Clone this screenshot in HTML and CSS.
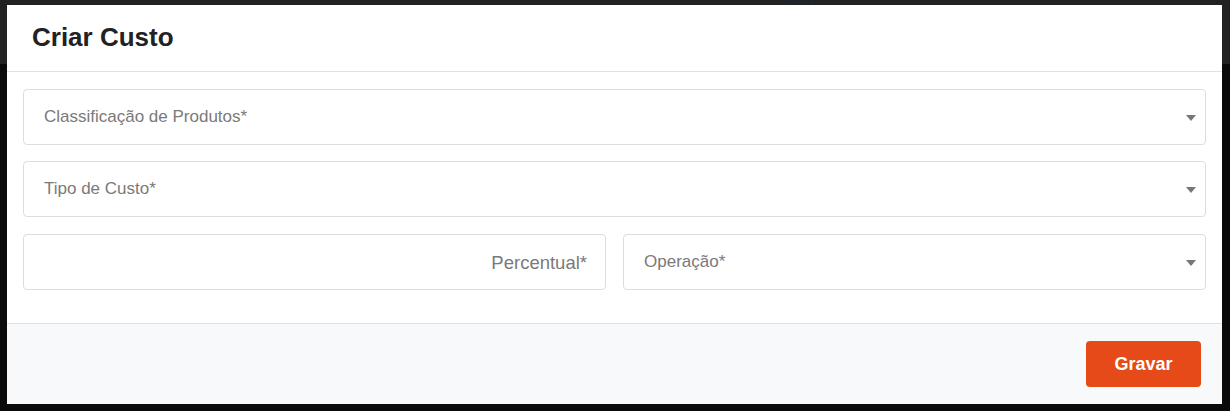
FILE: index.html
```html
<!DOCTYPE html>
<html lang="pt">
<head>
<meta charset="utf-8">
<title>Criar Custo</title>
<link rel="stylesheet" href="styles.css">
</head>
<body>
<div class="page">
  <div class="topbar"><span class="brand">ROI</span></div>
  <div class="rest"></div>
</div>
<div class="modal">
  <div class="modal-header">
    <h2 class="modal-title">Criar Custo</h2>
  </div>
  <div class="modal-body">
    <div class="field select">
      <span class="placeholder">Classificação de Produtos*</span>
      <span class="caret"></span>
    </div>
    <div class="field select">
      <span class="placeholder">Tipo de Custo*</span>
      <span class="caret"></span>
    </div>
    <div class="row">
      <div class="field input">
        <span class="placeholder big">Percentual*</span>
      </div>
      <div class="field select">
        <span class="placeholder">Operação*</span>
        <span class="caret"></span>
      </div>
    </div>
  </div>
  <div class="modal-footer">
    <button class="btn-primary" type="button">Gravar</button>
  </div>
</div>
</body>
</html>
```
FILE: styles.css
```css
html, body {
  margin: 0;
  padding: 0;
  height: 100%;
  font-family: "Liberation Sans", Arial, sans-serif;
}
.page {
  height: 411px;
  display: flex;
  flex-direction: column;
  overflow: hidden;
}
.topbar {
  height: 64px;
  background: #222222;
  position: relative;
  overflow: hidden;
}
.brand {
  position: absolute;
  left: 780px;
  top: -12px;
  font-size: 20px;
  font-weight: bold;
  color: #1b2430;
}
.rest {
  flex: 1;
  background: #0a0a0a;
}
.modal {
  position: absolute;
  top: 5px;
  left: 7px;
  width: 1215px;
  height: 399px;
  background: #ffffff;
  display: flex;
  flex-direction: column;
}
.modal-header {
  border-bottom: 1px solid #dee2e6;
  display: flex;
  align-items: center;
  padding: 0 25px;
  box-sizing: border-box;
  height: 67px;
}
.modal-title {
  margin: 0;
  font-size: 26px;
  font-weight: bold;
  color: #222222;
  position: relative;
  top: -1px;
}
.modal-body {
  padding: 17px 16px 0 16px;
  display: flex;
  flex-direction: column;
  gap: 16px;
  height: 252px;
  box-sizing: border-box;
  border-bottom: 1px solid #dee2e6;
}
.row {
  display: grid;
  grid-template-columns: 1fr 1fr;
  column-gap: 17px;
  margin-top: 1px;
}
.field {
  height: 56px;
  border: 1px solid #dddddd;
  border-radius: 4px;
  box-sizing: border-box;
  display: flex;
  align-items: center;
  padding: 0 9px 0 20px;
  background: #ffffff;
}
.field.input {
  justify-content: flex-end;
  padding-right: 18px;
}
.placeholder {
  font-size: 17px;
  color: #7a7a7a;
  flex: 1;
}
.placeholder.big {
  font-size: 18.5px;
  flex: none;
  position: relative;
  top: 1px;
}
.caret {
  width: 0;
  height: 0;
  border-left: 5px solid transparent;
  border-right: 5px solid transparent;
  border-top: 6px solid #777777;
  margin-top: 1px;
}
.modal-footer {
  flex: 1;
  background: #f8f9fa;
  display: flex;
  justify-content: flex-end;
  align-items: flex-start;
  padding: 17px 21px 0 0;
}
.btn-primary {
  width: 115px;
  height: 46px;
  background: #e64a19;
  color: #ffffff;
  border: none;
  border-radius: 4px;
  font-family: "Liberation Sans", Arial, sans-serif;
  font-size: 18px;
  font-weight: bold;
  padding: 0;
}
```
